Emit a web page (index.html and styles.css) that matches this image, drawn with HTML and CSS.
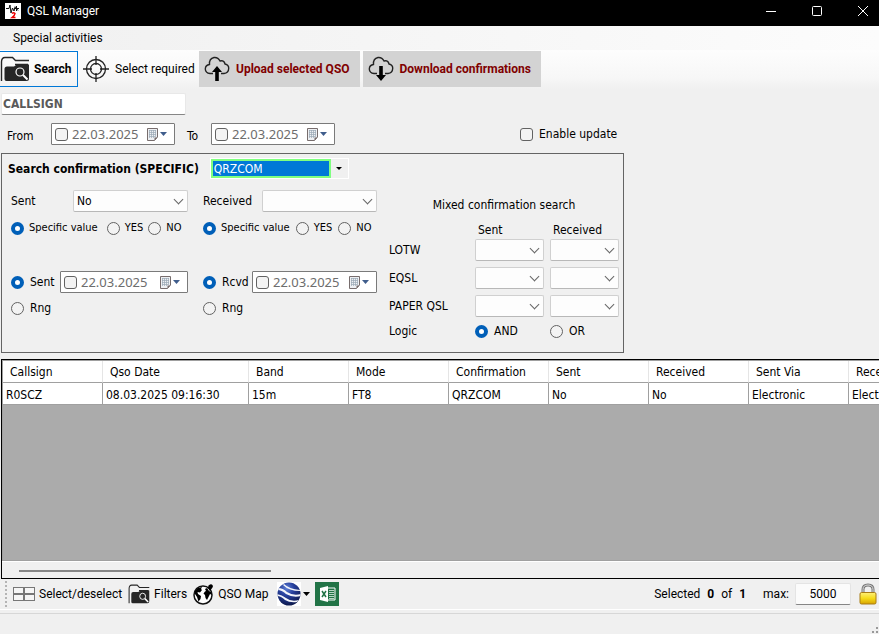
FILE: index.html
```html
<!DOCTYPE html>
<html lang="en">
<head>
    <meta charset="UTF-8">
    <meta name="viewport" content="width=device-width, initial-scale=1.0">
    <title>QSL Manager</title>
    <link rel="stylesheet" href="styles.css">
</head>
<body>

<!-- Shared icons -->
<svg class="sprite" width="0" height="0" aria-hidden="true">
    <symbol id="folder-search" viewBox="0 0 30 26">
        <path d="M1.500 25V6Q1.500 1.500 5 1.500H12.500L15.500 4.500H29M15 8.500H28" fill="none" stroke="#262626" stroke-width="1.400"/>
        <path d="M4.500 13Q4.500 10.500 7 10.500H14L17 8.500H29V22.500Q29 25 26.500 25H6.500Q4.500 25 4.500 23Z" fill="#262626"/>
        <circle cx="20" cy="16" r="4" fill="none" stroke="#fff" stroke-width="1.200"/>
        <path d="M23 19L27.500 23.500" stroke="#fff" stroke-width="2"/>
    </symbol>
    <symbol id="cloud" viewBox="0 0 26 26">
        <path d="M9 17.500H6Q1.500 17 1.300 13Q1.500 9 5.500 8.500Q5 2.500 10 1.500Q14 1 16 5Q20 4 21 8Q25 9 24.700 12.500Q24.500 17 20 17.500H17" fill="none" stroke="#222" stroke-width="1.400"/>
    </symbol>
    <symbol id="calendar" viewBox="0 0 22 13">
        <path d="M.5 .5H10.500V9L7.500 12.500H.5Z" fill="#eef0f3" stroke="#776d6d"/>
        <path d="M2 2.500H9M2 4.500H9M2 6.500H9M2 8.500H8M2.500 2V10M4.500 2V10M6.500 2V10M8.500 2V9" stroke="#9aa7b5" stroke-width=".7"/>
        <path d="M7.500 12.500V9.500H10.500Z" fill="#776d6d"/>
        <path d="M13 4H20L16.500 8Z" fill="#3f5d8c"/>
    </symbol>
</svg>

<div class="window">
    <header class="titlebar">
        <svg class="app-icon" width="16" height="16" viewBox="0 0 16 16">
            <rect width="16" height="16" fill="#fff"/>
            <path d="M1 5.500H4L5 2L6 10L7.500 5L9 8L10 4M9 5.500H14M11.500 3V8M10 3.500L13 7.500" fill="none" stroke="#111"/>
            <path d="M7 10.500Q8.500 9 10 10.500Q10 12 7 14.500H10.500" fill="none" stroke="#e00" stroke-width="1.500"/>
        </svg>
        <span class="title">QSL Manager</span>
        <button class="win-btn" aria-label="Minimize"><svg width="12" height="12" viewBox="0 0 12 12"><path d="M1 6.500H11"/></svg></button>
        <button class="win-btn" aria-label="Maximize"><svg width="12" height="12" viewBox="0 0 12 12"><rect x="1.500" y="1.500" width="9" height="9" rx="1"/></svg></button>
        <button class="win-btn" aria-label="Close"><svg width="12" height="12" viewBox="0 0 12 12"><path d="M1 1L11 11M11 1L1 11"/></svg></button>
    </header>

    <nav class="menu">
        <button class="menu-item">Special activities</button>
    </nav>

    <div class="toolbar">
        <button class="tool search">
            <svg width="30" height="26"><use href="#folder-search"/></svg>
            <b>Search</b>
        </button>
        <button class="tool required">
            <svg width="26" height="28" viewBox="0 0 26 28" fill="none" stroke="#222" stroke-width="1.300">
                <circle cx="13" cy="14" r="9.500"/>
                <circle cx="13" cy="14" r="5.500"/>
                <path d="M13 1V10M13 18V27M0 14H9M17 14H26"/>
            </svg>
            Select required
        </button>
        <button class="tool transfer">
            <svg width="26" height="26" viewBox="0 0 26 26"><use href="#cloud"/><path d="M13 10L18 16H14.800V25H11.200V16H8Z"/></svg>
            Upload selected QSO
        </button>
        <button class="tool transfer">
            <svg width="26" height="26" viewBox="0 0 26 26"><use href="#cloud"/><path d="M11.200 10H14.800V19H18L13 25L8 19H11.200Z"/></svg>
            Download confirmations
        </button>
    </div>

    <main class="content">
        <input class="callsign" type="text" placeholder="CALLSIGN" aria-label="Callsign">

        <div class="period">
            <label for="from">From</label>
            <div class="date">
                <input type="checkbox" aria-label="Use from date">
                <input type="text" id="from" value="22.03.2025">
                <button aria-label="Open calendar"><svg width="22" height="13"><use href="#calendar"/></svg></button>
            </div>
            <label for="to">To</label>
            <div class="date">
                <input type="checkbox" aria-label="Use to date">
                <input type="text" id="to" value="22.03.2025">
                <button aria-label="Open calendar"><svg width="22" height="13"><use href="#calendar"/></svg></button>
            </div>
            <label class="enable"><input type="checkbox"> Enable update</label>
        </div>

        <section class="panel">
            <div class="panel-head">
                <label for="service">Search confirmation (SPECIFIC)</label>
                <div class="service">
                    <select id="service"><option>QRZCOM</option></select>
                </div>
            </div>

            <div class="panel-body">
                <div class="side">
                    <div class="line">
                        <label for="sent">Sent</label>
                        <div class="drop"><select id="sent"><option>No</option></select></div>
                    </div>
                    <div class="choices">
                        <label><input type="radio" name="sent-value" checked> Specific value</label>
                        <label><input type="radio" name="sent-value"> YES</label>
                        <label><input type="radio" name="sent-value"> NO</label>
                    </div>
                    <div class="line">
                        <label><input type="radio" name="sent-date" checked> Sent</label>
                        <div class="date">
                            <input type="checkbox" aria-label="Use sent date">
                            <input type="text" value="22.03.2025" aria-label="Sent date">
                            <button aria-label="Open calendar"><svg width="22" height="13"><use href="#calendar"/></svg></button>
                        </div>
                    </div>
                    <label class="range"><input type="radio" name="sent-date"> Rng</label>
                </div>

                <div class="side">
                    <div class="line">
                        <label for="received">Received</label>
                        <div class="drop"><select id="received"><option></option></select></div>
                    </div>
                    <div class="choices">
                        <label><input type="radio" name="rcvd-value" checked> Specific value</label>
                        <label><input type="radio" name="rcvd-value"> YES</label>
                        <label><input type="radio" name="rcvd-value"> NO</label>
                    </div>
                    <div class="line">
                        <label><input type="radio" name="rcvd-date" checked> Rcvd</label>
                        <div class="date">
                            <input type="checkbox" aria-label="Use received date">
                            <input type="text" value="22.03.2025" aria-label="Received date">
                            <button aria-label="Open calendar"><svg width="22" height="13"><use href="#calendar"/></svg></button>
                        </div>
                    </div>
                    <label class="range"><input type="radio" name="rcvd-date"> Rng</label>
                </div>

                <div class="mixed">
                    <div class="mixed-title">Mixed confirmation search</div>
                    <span></span><span class="mixed-head">Sent</span><span class="mixed-head">Received</span>
                    <span>LOTW</span>
                    <div class="drop"><select aria-label="LOTW sent"><option></option></select></div>
                    <div class="drop"><select aria-label="LOTW received"><option></option></select></div>
                    <span>EQSL</span>
                    <div class="drop"><select aria-label="EQSL sent"><option></option></select></div>
                    <div class="drop"><select aria-label="EQSL received"><option></option></select></div>
                    <span>PAPER QSL</span>
                    <div class="drop"><select aria-label="Paper QSL sent"><option></option></select></div>
                    <div class="drop"><select aria-label="Paper QSL received"><option></option></select></div>
                    <span>Logic</span>
                    <label><input type="radio" name="logic" checked> AND</label>
                    <label><input type="radio" name="logic"> OR</label>
                </div>
            </div>
        </section>
    </main>

    <div class="results">
        <div class="results-view">
            <table>
                <colgroup><col class="col-call"><col class="col-date"><col span="7"></colgroup>
                <thead>
                    <tr><th>Callsign</th><th>Qso Date</th><th>Band</th><th>Mode</th><th>Confirmation</th><th>Sent</th><th>Received</th><th>Sent Via</th><th>Received Via</th></tr>
                </thead>
                <tbody>
                    <tr><td>R0SCZ</td><td>08.03.2025 09:16:30</td><td>15m</td><td>FT8</td><td>QRZCOM</td><td>No</td><td>No</td><td>Electronic</td><td>Electronic</td></tr>
                </tbody>
            </table>
        </div>
        <div class="scrollbar"><div class="thumb"></div></div>
    </div>

    <div class="bottombar">
        <span class="grip"></span>
        <button class="action">
            <svg width="22" height="14" viewBox="0 0 22 14" fill="#f6f6f6" stroke="#777">
                <rect x=".5" y=".5" width="10" height="6"/><rect x="11.500" y=".5" width="10" height="6"/>
                <rect x=".5" y="7.500" width="10" height="6"/><rect x="11.500" y="7.500" width="10" height="6"/>
            </svg>
            Select/deselect
        </button>
        <button class="action">
            <svg width="22" height="20" viewBox="0 0 30 26" preserveAspectRatio="none"><use href="#folder-search"/></svg>
            Filters
        </button>
        <button class="action">
            <svg width="21" height="22" viewBox="0 0 21 22">
                <circle cx="10" cy="12" r="9" fill="#fff" stroke="#111" stroke-width="1.500"/>
                <path d="M2 8L5 5L9 4L8 6L9 7L7 9.500L4.500 9L5 11L8 13L7.500 16L5.500 18.500L4 14L2 11Z"/>
                <path d="M12 6L14 5L16 8L18 9L19 12L17 11L16 13L14 17L12.500 15L12 12L10.500 10.500L12 8.500L13 8Z"/>
                <path d="M17 1.500A2 2 0 0 1 19.500 4.500L17 8L15 4.500Q15 2 17 1.500Z"/>
            </svg>
            QSO Map
        </button>
        <button class="action earth" aria-label="Google Earth">
            <svg width="24" height="24" viewBox="0 0 24 24">
                <defs>
                    <radialGradient id="sea" cx=".4" cy=".25" r=".8"><stop offset="0" stop-color="#5f80d6"/><stop offset=".4" stop-color="#263f9c"/><stop offset="1" stop-color="#0b1646"/></radialGradient>
                    <clipPath id="disc"><circle cx="12" cy="12" r="11.500"/></clipPath>
                </defs>
                <rect width="24" height="24" fill="#fff"/>
                <circle cx="12" cy="12" r="11.500" fill="url(#sea)"/>
                <g clip-path="url(#disc)" fill="#f4f6fb">
                    <path d="M1 6Q6 6 10 10Q16 14 24 12V14Q16 16 9 12Q5 8 0 8Z"/>
                    <path d="M0 12Q5 13 9 16Q14 20 22 18L20 20Q13 21 8 18Q4 14 0 14Z"/>
                    <path d="M7 2Q12 7 23 8V9Q12 9 6 3Z"/>
                </g>
            </svg>
            <svg width="7" height="4" viewBox="0 0 7 4"><path d="M0 0H7L3.500 4Z"/></svg>
        </button>
        <button class="action" aria-label="Export to Excel">
            <svg width="24" height="24" viewBox="0 0 24 24">
                <rect width="24" height="24" fill="#217346"/>
                <path d="M13 6H20V18H13" fill="none" stroke="#fff"/>
                <path d="M14 8.500H19M14 10.500H19M14 12.500H19M14 14.500H19M14 16.500H19" stroke="#b9d6c6"/>
                <path d="M5 6L13 4V20L5 18Z" fill="#fff"/>
                <path d="M7 9L11 15M11 9L7 15" stroke="#217346" stroke-width="1.500"/>
            </svg>
        </button>

        <div class="counter">Selected <b>0</b> of <b>1</b></div>
        <label for="max">max:</label>
        <input class="max" type="text" id="max" value="5000">
        <button class="action" aria-label="Lock">
            <svg width="18" height="22" viewBox="0 0 18 22">
                <defs><linearGradient id="gold" x2="0" y2="1"><stop offset="0" stop-color="#fff07a"/><stop offset=".5" stop-color="#f6dc1b"/><stop offset="1" stop-color="#d8a300"/></linearGradient></defs>
                <path d="M4 11V6.500Q4 2 9 2Q14 2 14 6.500V11" fill="none" stroke="#777" stroke-width="3"/>
                <path d="M4 11V6.500Q4 2 9 2Q14 2 14 6.500V11" fill="none" stroke="#ddd"/>
                <rect x="1" y="9.500" width="16" height="11.500" rx="1.500" fill="url(#gold)" stroke="#a87c14"/>
            </svg>
        </button>
    </div>

    <footer class="status">
        <svg width="8" height="8" viewBox="0 0 8 8" fill="#999"><path d="M5 1h2v2H5zM1 5h2v2H1zM5 5h2v2H5z"/></svg>
    </footer>
</div>

</body>
</html>
```
FILE: styles.css
```css
* {
    box-sizing: border-box;
}
body {
    margin: 0;
    background: #f0f0f0;
    color: #000;
    font-family: 'DejaVu Sans Condensed', 'DejaVu Sans', sans-serif;
    font-size: 12px;
    line-height: 16px;
}
button, input, select {
    margin: 0;
    font: inherit;
    color: inherit;
}
button {
    border: none;
    background: none;
    padding: 0;
}
svg {
    display: block;
    flex: none;
}
.sprite {
    position: absolute;
}
.window {
    min-height: 100vh;
    display: flex;
    flex-direction: column;
    overflow: hidden;
}

/* title bar and menu */
.titlebar {
    height: 26px;
    display: flex;
    align-items: center;
    background: #000;
    color: #fff;
    font-family: Roboto, sans-serif;
    padding: 0 10px 4px 5px;
}
.title {
    flex: 1;
    margin-left: 6px;
}
.win-btn {
    margin-left: 34px;
}
.win-btn svg {
    fill: none;
    stroke: #fff;
}
.menu {
    height: 24px;
    padding: 0 13px;
    display: flex;
    background: linear-gradient(to right, #f0f0f0, #fcfcfc);
    font-family: Roboto, sans-serif;
}

/* toolbar */
.toolbar {
    height: 39px;
    display: flex;
    align-items: flex-start;
    padding-top: 1px;
    background: linear-gradient(#fdfdfd, #f7f7f7 70%, #f0f0f0);
    font-family: Roboto, sans-serif;
}
.tool {
    height: 36px;
    display: flex;
    align-items: center;
    white-space: nowrap;
}
.search {
    width: 78px;
    gap: 4px;
    border: 1px solid #0078d7;
    border-left: none;
}
.required {
    width: 121px;
    padding-left: 5px;
    gap: 6px;
}
.transfer {
    padding: 0 10px 0 5px;
    gap: 6px;
    margin-right: 3px;
    background: #d3d3d3;
    color: #800000;
    font-weight: bold;
}
.transfer svg {
    fill: #000;
}

/* filters */
.content {
    padding: 4px 0 6px 1px;
}
.callsign {
    display: block;
    width: 185px;
    height: 22px;
    padding: 0 1px;
    border: 1px solid #e8e8e8;
    border-bottom-color: #868686;
    border-radius: 2px;
    background: #fff;
    font-weight: bold;
}
.callsign::placeholder {
    color: #5a5a5a;
    opacity: 1;
}
.period {
    display: flex;
    align-items: center;
    margin: 8px 0;
    padding-left: 6px;
}
.period > label:not(.enable) {
    padding-top: 4px;
}
.period label[for="from"] {
    width: 44px;
}
.period label[for="to"] {
    width: 24px;
}
.period .date {
    width: 124px;
    margin-right: 12px;
}
.period .enable {
    margin-left: 173px;
}
label {
    display: flex;
    align-items: center;
    white-space: nowrap;
}
input[type="checkbox"], input[type="radio"] {
    appearance: none;
    flex: none;
    width: 13px;
    height: 13px;
    margin-right: 6px;
    border: 1px solid #626262;
    border-radius: 3px;
    background: #f3f3f3;
}
input[type="radio"] {
    border-radius: 50%;
}
input[type="radio"]:checked {
    border: 4px solid #005fb8;
    background: #fff;
}
.date {
    height: 22px;
    display: flex;
    align-items: center;
    border: 1px solid #7a7a7a;
    border-radius: 1px;
    background: #fff;
    padding: 0 5px 0 3px;
}
.date input[type="checkbox"] {
    margin-right: 4px;
}
.date input[type="text"] {
    flex: 1;
    min-width: 0;
    border: none;
    padding: 0;
    background: none;
    color: #6d6d6d;
    font-family: 'Noto Sans', sans-serif;
    font-size: 13px;
}
.panel {
    width: 623px;
    border: 1px solid #646464;
    padding: 4px 4px 13px 6px;
}
.panel-head {
    display: flex;
    align-items: center;
    gap: 11px;
    font-weight: bold;
}
.service {
    display: grid;
    width: 139px;
    height: 21px;
    border: 1px solid #fff;
    font-weight: normal;
    grid-template-columns: 1fr 17px;
    align-items: center;
}
.service::after {
    content: '';
    justify-self: center;
    border: 3px solid transparent;
    border-top-color: #000;
    border-bottom: none;
}
select {
    appearance: none;
    width: 100%;
    border: 1px solid #d0d0d0;
    border-bottom-color: #b8b8b8;
    border-radius: 2px;
    background: #fdfdfd;
    padding: 0 3px;
    height: 22px;
}
.service select {
    height: 19px;
    border: 2px solid #80ff80;
    border-radius: 0;
    background: #0078d7;
    color: #fff;
    padding: 0 1px;
}
.drop {
    display: grid;
    align-items: center;
}
.drop select, .drop::after {
    grid-area: 1 / 1;
}
.drop::after {
    content: '';
    justify-self: end;
    width: 6px;
    height: 6px;
    margin: 0 6px 4px 0;
    border: solid #666;
    border-width: 0 1px 1px 0;
    transform: rotate(45deg);
    pointer-events: none;
}
.panel-body {
    display: flex;
    padding: 11px 0 0 3px;
}
.side {
    width: 177px;
    margin-right: 12px;
}
.side + .side {
    margin-left: 3px;
    width: 174px;
}
.line {
    display: flex;
    justify-content: space-between;
    align-items: center;
}
.line .drop {
    width: 115px;
}
.line .date {
    width: 128px;
}
.side + .side .date {
    width: 125px;
}
.choices {
    display: flex;
    gap: 9px;
    margin: 8px 0 35px;
    font-size: 11px;
}
.choices input[type="radio"] {
    margin-right: 5px;
}
.side + .side .choices {
    gap: 6px;
}
.choices label + label + label {
    margin-left: -4px;
}
.side + .side .choices label + label + label {
    margin-left: 0;
}
.range {
    margin-top: 7px;
}
.mixed {
    display: grid;
    grid-template-columns: 80px 69px 69px;
    column-gap: 6px;
    row-gap: 6px;
    align-items: center;
    padding-top: 7px;
}
.mixed-title {
    grid-column: 1 / -1;
    text-align: center;
    margin-bottom: 3px;
}
.mixed-head {
    padding-left: 3px;
    margin-bottom: -5px;
}

/* results grid */
.results {
    flex: 1;
    display: flex;
    flex-direction: column;
    margin-left: 1px;
    border: 1px solid #000;
    border-right: none;
}
.results-view {
    flex: 1;
    overflow: hidden;
    background: #ababab;
    border: 1px solid #a0a0a0;
    border-right: none;
}
table {
    table-layout: fixed;
    width: 946px;
    border-collapse: separate;
    border-spacing: 0;
    background: #fff;
}
col {
    width: 100px;
}
.col-date {
    width: 146px;
}
th, td {
    height: 22px;
    border: solid #a0a0a0;
    border-width: 0 1px 1px 0;
    padding: 2px 3px 0;
    font-weight: normal;
    text-align: left;
    white-space: nowrap;
    overflow: hidden;
}
th {
    padding: 0 7px;
    border-right-color: #e5e5e5;
}
.scrollbar {
    height: 17px;
    padding: 8px 0 0 17px;
    border-top: 1px solid #fff;
}
.thumb {
    width: 252px;
    height: 2px;
    background: #868686;
}

/* bottom toolbar */
.bottombar {
    height: 31px;
    display: flex;
    align-items: center;
    padding: 0 2px 0 5px;
    border-bottom: 1px solid #fff;
    font-family: Roboto, sans-serif;
    white-space: nowrap;
}
.grip {
    height: 26px;
    border-left: 2px dotted #b4b4b4;
    margin-right: 6px;
}
.action {
    display: flex;
    align-items: center;
    gap: 4px;
    margin-right: 6px;
}
.earth {
    gap: 2px;
    margin: 0 5px 0 2px;
}
.counter {
    margin-left: auto;
    margin-right: 13px;
}
.counter b {
    margin: 0 4px;
}
.max {
    width: 56px;
    height: 22px;
    margin: 0 8px 0 6px;
    border: 1px solid #e4e4e4;
    border-bottom-color: #868686;
    border-radius: 2px;
    background: #fbfbfb;
    text-align: center;
}
.bottombar .action:last-child {
    margin-right: 0;
}
.status {
    height: 21px;
    margin-top: 3px;
    display: flex;
    justify-content: flex-end;
    align-items: flex-end;
    border-top: 1px solid #d7d7d7;
}
```
